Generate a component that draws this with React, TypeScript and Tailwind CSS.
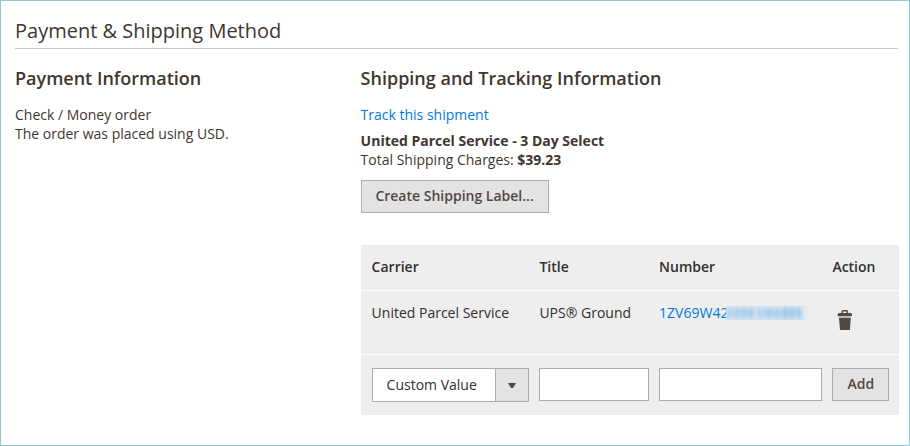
const columns = 'grid grid-cols-[157.8px_109.7px_163.3px_57px] gap-x-[10px] pl-[11px]';

function TrashIcon() {
  return (
    <svg width="16" height="21" viewBox="0 0 16 21" fill="#514943" aria-hidden="true">
      <path d="M4.5 3V1.6Q4.5 0 6 0H9.6Q11.1 0 11.1 1.6V3H9.6V1.4H6V3Z" />
      <path d="M1.8 3H13.8Q15.2 3.6 15.2 6H.4Q.4 3.6 1.8 3Z" />
      <path d="M1.8 6H14V8H1.8Z" fill="#bdbab7" />
      <path d="M2 8H13.8L12.9 20H3Z" />
    </svg>
  );
}

function RedactedNumber() {
  return (
    <span className="mt-[6px] block h-[14px] w-[82px] overflow-hidden" aria-hidden="true">
      <svg width="82" height="14" viewBox="0 0 82 14" className="block">
        <defs>
          <filter id="soft" x="-10%" y="-60%" width="120%" height="220%">
            <feGaussianBlur stdDeviation="1.6 2.4" />
          </filter>
          <linearGradient id="fade">
            <stop offset="0.9" stopColor="#eeeeee" stopOpacity="0" />
            <stop offset="1" stopColor="#eeeeee" stopOpacity="0.75" />
          </linearGradient>
        </defs>
        <rect width="82" height="14" fill="#d5e4f0" />
        <g fill="#92c3ea">
          <g filter="url(#soft)" opacity="0.85">
            <rect x="0" y="3" width="28" height="8" opacity="0.5" />
            <rect x="31" y="3.5" width="46" height="7.5" opacity="0.6" />
            <rect x="2" y="3" width="3" height="8" opacity="0.7" />
            <rect x="9" y="3" width="4" height="8" opacity="0.8" />
            <rect x="16" y="3" width="4" height="8" opacity="0.8" />
            <rect x="23" y="3" width="4" height="8" />
            <rect x="40" y="3" width="6" height="8" opacity="0.8" />
            <rect x="49" y="3" width="4" height="8" opacity="0.8" />
            <rect x="57" y="2" width="5" height="10" />
            <rect x="64" y="2" width="4" height="10" />
            <rect x="71" y="3" width="4" height="8" />
          </g>
        </g>
        <rect width="82" height="14" fill="url(#fade)" />
      </svg>
    </span>
  );
}

export default function App() {
  return (
    <main className="h-[446px] w-[910px] border border-[#8fcad8] bg-white pt-[18px] pr-[11px] pl-[14px] font-['Open_Sans','Noto_Sans',sans-serif] text-[14px] leading-[19px] text-[#41362f]">
      <h1 className="h-[30px] border-b border-[#cac9c9] text-[20px] leading-[24px]">Payment &amp; Shipping Method</h1>
      <div className="flex">
        <section className="w-[345.6px] shrink-0 pt-[17px]">
          <h2 className="mb-[15px] text-[18px] leading-[24px] font-semibold">Payment Information</h2>
          <p>Check / Money order</p>
          <p>The order was placed using USD.</p>
        </section>
        <section className="w-[538px] shrink-0 pt-[17px]">
          <h2 className="mb-[15px] text-[18px] leading-[24px] font-semibold">Shipping and Tracking Information</h2>
          <a className="block text-[#007bdb]">Track this shipment</a>
          <p className="mt-[7px] font-bold">United Parcel Service - 3 Day Select</p>
          <p>
            Total Shipping Charges: <b>$39.23</b>
          </p>
          <button className="mt-[11px] block h-[33px] w-[188px] border border-[#adadad] bg-[#e3e3e3] pb-[2px] font-semibold text-[#514943]">
            Create Shipping Label...
          </button>

          <div className="mt-[32px] h-[170px] bg-[#eeeeee] text-[#303030]">
            <div className={`${columns} h-[46px] border-b border-white pt-[12px] font-semibold`}>
              <span>Carrier</span>
              <span>Title</span>
              <span>Number</span>
              <span>Action</span>
            </div>
            <div className={`${columns} h-[64px] border-b border-white pt-[12px]`}>
              <span>United Parcel Service</span>
              <span>UPS® Ground</span>
              <span className="-mt-[3px] flex">
                <a className="w-[66.9px] pt-[3px] text-[#007bdb]">1ZV69W42</a>
                <RedactedNumber />
              </span>
              <span className="pt-[7px] pl-[5px]">
                <TrashIcon />
              </span>
            </div>
            <div className={`${columns} items-start pt-[13px]`}>
              <div className="flex h-[34px] border border-[#adadad] bg-white">
                <span className="flex-1 pt-[6px] pl-[14px]">Custom Value</span>
                <span className="flex w-[33px] items-center justify-center border-l border-[#adadad] bg-[#e3e3e3]">
                  <svg width="8" height="5" viewBox="0 0 8 5" aria-hidden="true">
                    <path d="M0 0H8L5 5H3Z" fill="#514943" />
                  </svg>
                </span>
              </div>
              <input aria-label="Title" className="h-[33px] w-full border border-[#adadad] bg-white" />
              <input aria-label="Number" className="h-[33px] w-full border border-[#adadad] bg-white" />
              <button className="h-[33px] border border-[#adadad] bg-[#e3e3e3] pb-[2px] font-semibold text-[#514943]">Add</button>
            </div>
          </div>
        </section>
      </div>
    </main>
  );
}
